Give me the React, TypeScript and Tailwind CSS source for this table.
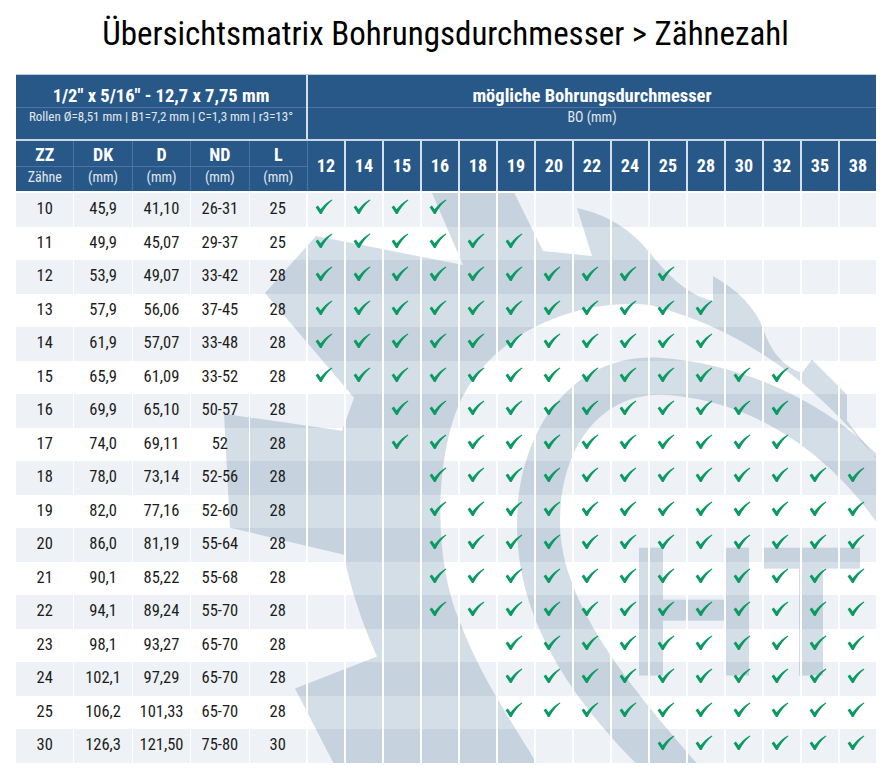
import React from 'react';

const BO = ['12', '14', '15', '16', '18', '19', '20', '22', '24', '25', '28', '30', '32', '35', '38'];

// zz, dk, d, nd, l, first and last BO column index with a check
const rows: [string, string, string, string, string, number, number][] = [
  ['10', '45,9', '41,10', '26-31', '25', 0, 3],
  ['11', '49,9', '45,07', '29-37', '25', 0, 5],
  ['12', '53,9', '49,07', '33-42', '28', 0, 9],
  ['13', '57,9', '56,06', '37-45', '28', 0, 10],
  ['14', '61,9', '57,07', '33-48', '28', 0, 10],
  ['15', '65,9', '61,09', '33-52', '28', 0, 12],
  ['16', '69,9', '65,10', '50-57', '28', 2, 12],
  ['17', '74,0', '69,11', '52', '28', 2, 12],
  ['18', '78,0', '73,14', '52-56', '28', 3, 14],
  ['19', '82,0', '77,16', '52-60', '28', 3, 14],
  ['20', '86,0', '81,19', '55-64', '28', 3, 14],
  ['21', '90,1', '85,22', '55-68', '28', 3, 14],
  ['22', '94,1', '89,24', '55-70', '28', 3, 14],
  ['23', '98,1', '93,27', '65-70', '28', 5, 14],
  ['24', '102,1', '97,29', '65-70', '28', 5, 14],
  ['25', '106,2', '101,33', '65-70', '28', 5, 14],
  ['30', '126,3', '121,50', '75-80', '30', 9, 14],
];

const leftCols = [
  { key: 'ZZ', unit: 'Zähne' },
  { key: 'DK', unit: '(mm)' },
  { key: 'D', unit: '(mm)' },
  { key: 'ND', unit: '(mm)' },
  { key: 'L', unit: '(mm)' },
];

const Check = () => (
  <svg viewBox="0 0 18 16" className="-mt-[5px] -ml-[3px] h-[16px] w-[18px]">
    <path
      fill="#0b9a62"
      d="M0.6 8.2 L2.9 6.6 L5.6 10.2 C8.6 6.2 12.4 2.8 16.8 0.4 L17.4 1.2 C13.2 4.6 9.4 9.4 6.6 15 L5 15 Z"
    />
  </svg>
);

// faint logo behind the table body, drawn in page coordinates
const Watermark = () => (
  <svg
    className="pointer-events-none absolute inset-0 h-full w-full"
    viewBox="16 195 860 570"
    preserveAspectRatio="none"
  >
    <g fill="#285887" fillOpacity="0.2">
      {/* sprocket with its hole */}
      <path
        fillRule="evenodd"
        d="M346 790 L295 691 L377 659 C362 625 350 590 344 557 L230 530 L224 416 L342 433 L354 400 L265 295 L316 238 L463 267 L417 160 L497 160 L543 253 L592 258 L577 210 C605 216 630 230 650 255 C670 280 690 298 713 303 L713 278 C738 292 755 310 763 330 C770 352 782 368 802 375 L812 362 L847 397 L847 423 L873 457 L950 520 L950 790 Z
           M900 470 L873 457 C830 405 760 335 650 307 C575 300 495 335 462 400 C435 455 432 560 460 625 C485 690 520 735 551 790 L900 790 Z"
      />
      {/* inner arc */}
      <path d="M890 470 C845 420 765 368 660 360 C575 354 517 430 517 527 C517 630 580 710 645 775 L705 775 C640 700 560 610 560 525 C560 450 600 397 660 397 C750 400 835 455 890 545 Z" />
      {/* HT */}
      <rect x="639" y="550" width="24" height="128" />
      <rect x="726" y="550" width="23" height="128" />
      <rect x="663" y="602" width="63" height="21" />
      <rect x="763" y="550" width="97" height="21" />
      <rect x="799" y="571" width="24" height="107" />
    </g>
  </svg>
);

export default function App() {
  return (
    <div className="min-h-screen bg-white font-['Roboto_Condensed',Roboto,sans-serif] text-[#1c1c1c]">
      <h1 className="h-[74px] pt-[17px] text-center text-[33px] leading-none text-black">
        Übersichtsmatrix Bohrungsdurchmesser &gt; Zähnezahl
      </h1>

      <div className="ml-[16px] w-[860px]">
        {/* header */}
        <div className="border-t border-[#bfcddb] bg-[#285887] text-white">
          <div className="flex h-[66px] border-b-2 border-[#c9d6e3]">
            <div className="flex w-[292px] flex-col border-r-2 border-[#d6e0ea]">
              <div className="flex h-[33px] items-end justify-center border-b border-[#4d73a0] pb-[2px] text-[18.5px] font-bold leading-none">
                1/2" x 5/16" - 12,7 x 7,75 mm
              </div>
              <div className="pt-[2px] text-center text-[13px] leading-none text-[#e1e8f0]">
                Rollen Ø=8,51 mm | B1=7,2 mm | C=1,3 mm | r3=13°
              </div>
            </div>
            <div className="flex flex-1 flex-col">
              <div className="flex h-[33px] items-end justify-center border-b border-[#4d73a0] pb-[2px] text-[18.5px] font-bold leading-none">
                mögliche Bohrungsdurchmesser
              </div>
              <div className="pt-[2px] text-center text-[14px] leading-none text-[#e1e8f0]">BO (mm)</div>
            </div>
          </div>
          <div className="flex h-[50px]">
            {leftCols.map((c) => (
              <div key={c.key} className="flex w-[58.4px] flex-col border-r border-[#4d73a0] last:border-r-2 last:border-[#d6e0ea]">
                <div className="flex h-[26px] items-end justify-center border-b border-[#4d73a0] pb-[2px] text-[18px] font-bold leading-none">
                  {c.key}
                </div>
                <div className="pt-[3px] text-center text-[14px] leading-none text-[#e1e8f0]">{c.unit}</div>
              </div>
            ))}
            {BO.map((b) => (
              <div
                key={b}
                className="flex flex-1 items-center justify-center border-r-2 border-[#d6e0ea] text-[18px] font-bold leading-none last:border-r-0"
              >
                {b}
              </div>
            ))}
          </div>
        </div>

        {/* body */}
        <div className="relative mt-[2px]">
          <Watermark />
          {rows.map(([zz, dk, d, nd, l, from, to], i) => (
            <div key={zz} className={`relative flex h-[33.5px] text-[16.5px] ${i % 2 === 0 ? 'bg-[#285887]/[0.08]' : ''}`}>
              {[zz, dk, d, nd, l].map((v, j) => (
                <div
                  key={j}
                  className={`flex w-[58.4px] items-center justify-center border-white ${j === 4 ? 'border-r-2' : 'border-r'}`}
                >
                  {v}
                </div>
              ))}
              {BO.map((b, k) => (
                <div key={b} className="flex flex-1 items-center justify-center border-r-2 border-white last:border-r-0">
                  {k >= from && k <= to && <Check />}
                </div>
              ))}
            </div>
          ))}
        </div>
      </div>
    </div>
  );
}
